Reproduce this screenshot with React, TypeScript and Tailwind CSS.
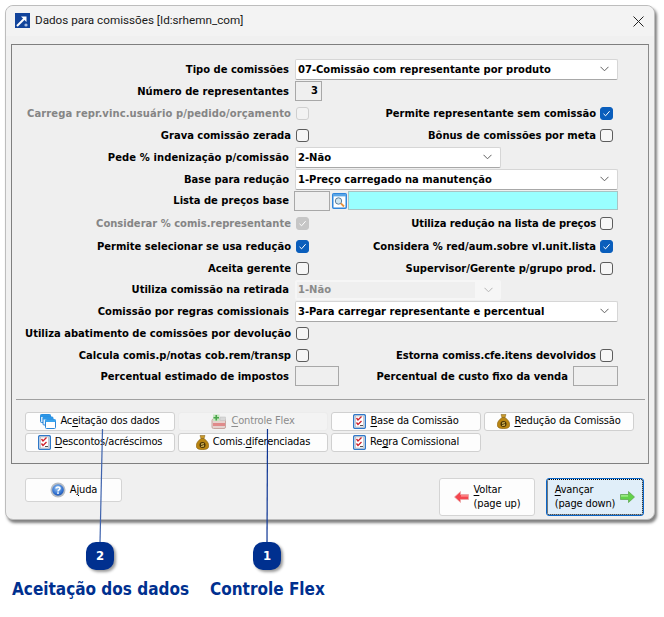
import React from "react";

const FONT = "[font-family:'DejaVu_Sans_Condensed','DejaVu_Sans',sans-serif]";

function Check({ on, disabled }: { on?: boolean; disabled?: boolean }) {
  const cls = on
    ? disabled
      ? "bg-[#c6c6c6] border-[#c6c6c6]"
      : "bg-[#0a5ebc] border-[#0a5ebc]"
    : disabled
      ? "bg-[#f2f2f2] border-[#cfcfcf]"
      : "bg-[#f6f6f6] border-[#5c5c5c]";
  return (
    <span className={`flex h-[13px] w-[13px] shrink-0 items-center justify-center rounded-[3px] border ${cls}`}>
      {on && (
        <svg width="9" height="9" viewBox="0 0 9 9" fill="none">
          <path d="M1.5 4.8 L3.6 6.8 L7.6 2.2" stroke="white" strokeWidth="1" />
        </svg>
      )}
    </span>
  );
}

function Chevron({ light }: { light?: boolean }) {
  return (
    <svg width="9" height="6" viewBox="0 0 9 6" fill="none" className="shrink-0">
      <path d="M0.5 0.8 L4.5 4.8 L8.5 0.8" stroke={light ? "#b5b5b5" : "#606060"} strokeWidth="1" />
    </svg>
  );
}

function Combo({ text, w, h = 21, disabled }: { text: string; w: number; h?: number; disabled?: boolean }) {
  if (disabled) {
    return (
      <div style={{ width: w, height: h }} className="flex shrink-0 items-center rounded-[2px] bg-[#f6f6f6] pl-[2px] pr-[8px] text-[11.1px] font-bold text-[#8a8a8a]">
        <span className="mr-[9px] flex h-[16px] flex-1 items-center bg-[#efefef] pl-[1px] pt-[2px]">{text}</span>
        <Chevron light />
      </div>
    );
  }
  return (
    <div
      style={{ width: w, height: h }}
      className="flex shrink-0 items-center justify-between rounded-[2px] border border-[#d6d6d6] border-b-[#a8a8a8] bg-white pl-[2px] pr-[8px] text-[11.1px] font-bold text-black"
    >
      <span className="pt-[2px]">{text}</span>
      <Chevron />
    </div>
  );
}

function Label({ children, muted, w, track }: { children: React.ReactNode; muted?: boolean; w: number; track?: string }) {
  return (
    <span className={`shrink-0 whitespace-nowrap pt-[2px] text-right text-[11.1px] font-bold ${track ?? ""} ${muted ? "text-[#858585]" : "text-black"}`} style={{ width: w }}>
      {children}
    </span>
  );
}

function CheckRow({
  h,
  left,
  leftOn,
  leftDisabled,
  leftTrack,
  right,
  rightOn,
  rightTrack,
}: {
  h: number;
  left?: string;
  leftOn?: boolean;
  leftDisabled?: boolean;
  leftTrack?: string;
  right?: string;
  rightOn?: boolean;
  rightTrack?: string;
}) {
  return (
    <div style={{ height: h }} className="flex items-center">
      {left ? (
        <>
          <Label w={279} muted={leftDisabled} track={leftTrack}>
            {left}
          </Label>
          <span className="ml-[5px]">
            <Check on={leftOn} disabled={leftDisabled} />
          </span>
        </>
      ) : null}
      {right ? (
        <>
          <span className={`flex-1 pt-[2px] text-right text-[11.1px] font-bold text-black ${rightTrack ?? ""}`}>{right}</span>
          <span className="ml-[4px] mr-[35px]">
            <Check on={rightOn} />
          </span>
        </>
      ) : null}
    </div>
  );
}

function FieldRow({ h, label, track, children }: { h: number; label: string; track?: string; children: React.ReactNode }) {
  return (
    <div style={{ height: h }} className="flex items-center">
      <Label w={277} track={track}>
        {label}
      </Label>
      <div className="ml-[6px] flex items-center">{children}</div>
    </div>
  );
}

function U({ children }: { children: React.ReactNode }) {
  return <span className="underline underline-offset-2 decoration-1">{children}</span>;
}

function IconWindows() {
  return (
    <svg width="16" height="15" viewBox="0 0 16 15">
      <rect x="0.5" y="0.5" width="10" height="8" rx="1" fill="#cfe8fb" stroke="#2a86d8" />
      <rect x="0.5" y="0.5" width="10" height="2.5" fill="#2a97e8" />
      <rect x="3" y="3" width="10" height="8" rx="1" fill="#e6f3fd" stroke="#2a86d8" />
      <rect x="3" y="3" width="10" height="2.5" fill="#2a97e8" />
      <rect x="5.5" y="5.5" width="10" height="9" rx="1" fill="#ffffff" stroke="#2a86d8" />
      <rect x="5.5" y="5.5" width="10" height="2.5" fill="#3aa4ee" />
    </svg>
  );
}

function IconChecklist() {
  return (
    <svg width="13" height="15" viewBox="0 0 13 15">
      <rect x="0.6" y="0.6" width="11.8" height="13.8" rx="1.5" fill="#e9e9ef" stroke="#2f78c8" strokeWidth="1.3" />
      <rect x="2.5" y="2" width="8" height="11" fill="#ffffff" stroke="#9aa0a8" strokeWidth="0.5" />
      <path d="M3.5 4 L5 6 L8.5 2.5" stroke="#d0202a" strokeWidth="1.3" fill="none" />
      <path d="M3.5 8.5 L5 10.5 L8.5 7" stroke="#d0202a" strokeWidth="1.3" fill="none" />
      <path d="M7 11.5 H10" stroke="#555" strokeWidth="1" />
    </svg>
  );
}

function IconBag() {
  return (
    <svg width="13" height="15" viewBox="0 0 13 15">
      <path d="M4 0.5 H9 L8 3.5 H5 Z" fill="#c99a2a" stroke="#7d5a12" strokeWidth="0.5" />
      <path d="M5 3.5 H8 C11 5.5 13 8.5 12.8 11 C12.6 14 10 14.7 6.5 14.7 C3 14.7 0.4 14 0.2 11 C0 8.5 2 5.5 5 3.5 Z" fill="#b98512" stroke="#7d5a12" strokeWidth="0.5" />
      <circle cx="6.5" cy="10" r="3" fill="#4a3508" />
      <path d="M8 8.6 H5.6 V10 H7.6 V11.5 H5" stroke="#e8c860" strokeWidth="0.8" fill="none" />
    </svg>
  );
}

function IconFlex() {
  return (
    <svg width="16" height="15" viewBox="0 0 16 15">
      <rect x="1" y="5" width="13.5" height="9.5" rx="1.5" fill="#e6d2ce" stroke="#c7a6a0" />
      <rect x="2" y="9" width="12" height="3" fill="#e08a8a" />
      <rect x="9" y="3" width="5.5" height="3.5" fill="#d8d8d8" stroke="#bdbdbd" strokeWidth="0.5" />
      <rect x="2" y="0.5" width="6.5" height="6.5" fill="#c6e6c0" />
      <path d="M5.25 1 V6.5 M2.5 3.75 H8" stroke="#4aa54a" strokeWidth="1.6" />
    </svg>
  );
}

function IconHelp() {
  return (
    <svg width="16" height="16" viewBox="0 0 16 16">
      <defs>
        <radialGradient id="hg" cx="45%" cy="35%" r="70%">
          <stop offset="0%" stopColor="#9cc8f2" />
          <stop offset="70%" stopColor="#2f6fd0" />
          <stop offset="100%" stopColor="#234f9c" />
        </radialGradient>
      </defs>
      <circle cx="8" cy="8" r="7.5" fill="#b9bec4" />
      <circle cx="8" cy="8" r="5.8" fill="url(#hg)" />
      <path d="M6 6.4 C6 4.6 10 4.6 10 6.5 C10 8 8 7.8 8 9.4" stroke="white" strokeWidth="1.5" fill="none" />
      <rect x="7.2" y="10.3" width="1.6" height="1.6" fill="white" />
    </svg>
  );
}

function IconArrow({ dir }: { dir: "left" | "right" }) {
  const left = dir === "left";
  return (
    <svg width="15" height="12" viewBox="0 0 15 12" style={{ transform: left ? undefined : "scaleX(-1)" }}>
      <path
        d="M0.5 6 L6.5 0.5 V3.5 H14.5 V8.5 H6.5 V11.5 Z"
        fill={left ? "#f4474f" : "#62d24a"}
        stroke={left ? "#e8a8a8" : "#5aa04a"}
        strokeWidth="0.7"
      />
      <path d="M7 4.2 H14 V5.6 H7 Z" fill={left ? "#ff8f90" : "#a6ee90"} />
    </svg>
  );
}

function IconSearch() {
  return (
    <svg width="15" height="16" viewBox="0 0 15 16">
      <rect x="0.75" y="0.75" width="13.5" height="14.5" rx="1" fill="#ffffff" stroke="#2f86dc" strokeWidth="1.5" />
      <rect x="1" y="1" width="13" height="2.4" fill="#5aa6e6" />
      <circle cx="6.5" cy="8" r="3.2" fill="#cfe6f2" stroke="#5f7f9a" />
      <path d="M8.9 10.4 L12 13.5" stroke="#e8923a" strokeWidth="1.8" />
    </svg>
  );
}

function ToolBtn({ icon, children, disabled }: { icon: React.ReactNode; children: React.ReactNode; disabled?: boolean }) {
  return (
    <div
      className={`flex h-[19px] items-center justify-center gap-[4px] rounded-[3px] border text-[11px] tracking-[-0.15px] ${
        disabled ? "border-[#ececec] bg-[#f3f3f3] text-[#8c8c8c]" : "border-[#d0d0d0] bg-[#fdfdfd] text-black"
      }`}
    >
      {icon}
      <span className="whitespace-nowrap">{children}</span>
    </div>
  );
}

function Callout({ n, x, label, labelX, lineFrom }: { n: number; x: number; label: string; labelX: number; lineFrom: number }) {
  return (
    <>
      <svg className="absolute left-0 top-[425px]" width="664" height="120">
        <path d={`M${lineFrom} 4 L${x} 118`} stroke={n === 2 ? "#3f63ad" : "#0b3393"} strokeWidth="1.2" fill="none" />
      </svg>
      <div
        style={{ left: x - 14 }}
        className="absolute top-[542px] flex h-[28px] w-[28px] items-center justify-center rounded-[10px] bg-[#00308f] text-[13px] font-bold text-white shadow-[2px_2px_3px_rgba(0,0,0,0.4)]"
      >
        {n}
      </div>
      <div style={{ left: labelX }} className="absolute top-[577px] whitespace-nowrap text-[17px] font-bold leading-[24px] text-[#00308f]">
        {label}
      </div>
    </>
  );
}

export default function App() {
  return (
    <div className={`relative h-[617px] w-[664px] overflow-hidden bg-white pl-[5px] pt-[5px] ${FONT}`}>
      <div className="flex h-[515px] w-[650px] flex-col rounded-[8px] border border-[#bdbdbd] bg-[#f0f0f0] shadow-[2px_3px_3px_rgba(0,0,0,0.5)]">
        {/* title bar */}
        <div className="flex h-[30px] items-center justify-between rounded-t-[8px] bg-[#f3f3f3] pl-[9px] pr-[8px]">
          <div className="flex items-center gap-[5px]">
            <svg width="15" height="15" viewBox="0 0 15 15">
              <rect width="15" height="15" fill="#12449b" />
              <path d="M2 13 L10 5" stroke="white" strokeWidth="2" />
              <path d="M6 3.5 H11.5 V9 Z" fill="white" />
              <circle cx="11" cy="12" r="1.6" fill="#a9c0e4" />
            </svg>
            <span className="[font-family:'Roboto',sans-serif] text-[11.7px] text-[#1a1a1a]">Dados para comissões [Id:srhemn_com]</span>
          </div>
          <svg width="11" height="11" viewBox="0 0 11 11" className="mr-[2px]">
            <path d="M0.5 0.5 L10.5 10.5 M10.5 0.5 L0.5 10.5" stroke="#222" strokeWidth="1" />
          </svg>
        </div>

        {/* body */}
        <div className="flex flex-1 flex-col px-[5px] pt-[8px]">
          <div className="h-[420px] border border-[#7f7f7f] border-r-[#8a8a8a] bg-[#efefef] pt-[13px]">
            <FieldRow h={22} label="Tipo de comissões">
              <Combo w={323} text="07-Comissão com representante por produto" />
            </FieldRow>
            <FieldRow h={22} label="Número de representantes">
              <div className="flex h-[20px] w-[27px] items-center justify-end border border-[#a8a8a8] pr-[3px] pt-[1px] text-[11.1px] font-bold">3</div>
            </FieldRow>
            <CheckRow h={23} left="Carrega repr.vinc.usuário p/pedido/orçamento" leftDisabled leftTrack="tracking-[0.1px]" right="Permite representante sem comissão" rightOn />
            <CheckRow h={21} left="Grava comissão zerada" right="Bônus de comissões por meta" />
            <FieldRow h={22} label="Pede % indenização p/comissão" track="tracking-[0.1px]">
              <Combo w={206} text="2-Não" />
            </FieldRow>
            <FieldRow h={22} label="Base para redução">
              <Combo w={323} text="1-Preço carregado na manutenção" />
            </FieldRow>
            <FieldRow h={21} label="Lista de preços base">
              <div className="-ml-[1px] h-[20px] w-[36px] border border-[#a8a8a8]" />
              <span className="ml-[2px] flex">
                <IconSearch />
              </span>
              <div className="ml-[1px] h-[19px] w-[270px] border border-[#a8c4c4] bg-[#99ffff]" />
            </FieldRow>
            <CheckRow h={24} left="Considerar % comis.representante" leftOn leftDisabled right="Utiliza redução na lista de preços" rightTrack="tracking-[-0.1px]" />
            <CheckRow h={22} left="Permite selecionar se usa redução" leftOn right="Considera % red/aum.sobre vl.unit.lista" rightOn />
            <CheckRow h={22} left="Aceita gerente" right="Supervisor/Gerente p/grupo prod." />
            <FieldRow h={21} label="Utiliza comissão na retirada">
              <Combo w={206} h={20} text="1-Não" disabled />
            </FieldRow>
            <FieldRow h={22} label="Comissão por regras comissionais">
              <Combo w={323} text="3-Para carregar representante e percentual" />
            </FieldRow>
            <CheckRow h={23} left="Utiliza abatimento de comissões por devolução" />
            <CheckRow h={21} left="Calcula comis.p/notas cob.rem/transp" right="Estorna comiss.cfe.itens devolvidos" rightTrack="tracking-[-0.05px]" />
            <div className="flex h-[20px] items-center">
              <Label w={277}>Percentual estimado de impostos</Label>
              <div className="ml-[6px] h-[20px] w-[44px] border border-[#a8a8a8]" />
              <span className="flex-1 pt-[2px] text-right text-[11.1px] font-bold text-black">Percentual de custo fixo da venda</span>
              <div className="ml-[5px] mr-[30px] h-[20px] w-[45px] border border-[#a8a8a8]" />
            </div>

            <div className="ml-[4px] mr-[3px] mt-[13px] border-t border-[#a0a0a0]" />

            <div className="mt-[12px] grid w-[622px] grid-cols-4 gap-x-[3px] gap-y-[2px] pl-[13px]">
              <ToolBtn icon={<IconWindows />}>
                Ac<U>e</U>itação dos dados
              </ToolBtn>
              <ToolBtn icon={<IconFlex />} disabled>
                <U>C</U>ontrole Flex
              </ToolBtn>
              <ToolBtn icon={<IconChecklist />}>
                <U>B</U>ase da Comissão
              </ToolBtn>
              <ToolBtn icon={<IconBag />}>
                <U>R</U>edução da Comissão
              </ToolBtn>
              <ToolBtn icon={<IconChecklist />}>
                <U>D</U>escontos/acréscimos
              </ToolBtn>
              <ToolBtn icon={<IconBag />}>
                Comis.<U>d</U>iferenciadas
              </ToolBtn>
              <ToolBtn icon={<IconChecklist />}>
                Re<U>g</U>ra Comissional
              </ToolBtn>
            </div>
          </div>

          {/* footer */}
          <div className="mt-[14px] flex items-start pl-[14px] text-[11px] tracking-[-0.15px] text-black">
            <div className="flex h-[24px] w-[97px] items-center justify-center gap-[4px] rounded-[3px] border border-[#d4d4d4] bg-[#fdfdfd]">
              <IconHelp />
              <span>
                A<U>j</U>uda
              </span>
            </div>
            <div className="ml-auto flex h-[38px] w-[96px] items-center justify-center gap-[5px] rounded-[3px] border border-[#d4d4d4] bg-[#fdfdfd]">
              <IconArrow dir="left" />
              <span className="leading-[14px]">
                <U>V</U>oltar
                <br />
                (page up)
              </span>
            </div>
            <div className="ml-[11px] mr-[5px] flex h-[38px] w-[98px] items-center justify-center gap-[5px] rounded-[3px] border border-[#0a66c8] bg-[#e0eef9] outline-1 -outline-offset-2 outline-dotted outline-black">
              <span className="leading-[14px]">
                <U>A</U>vançar
                <br />
                (page down)
              </span>
              <IconArrow dir="right" />
            </div>
          </div>
        </div>
      </div>

      <Callout n={2} x={100} lineFrom={102.5} label="Aceitação dos dados" labelX={12} />
      <Callout n={1} x={267} lineFrom={267.5} label="Controle Flex" labelX={210} />
    </div>
  );
}
